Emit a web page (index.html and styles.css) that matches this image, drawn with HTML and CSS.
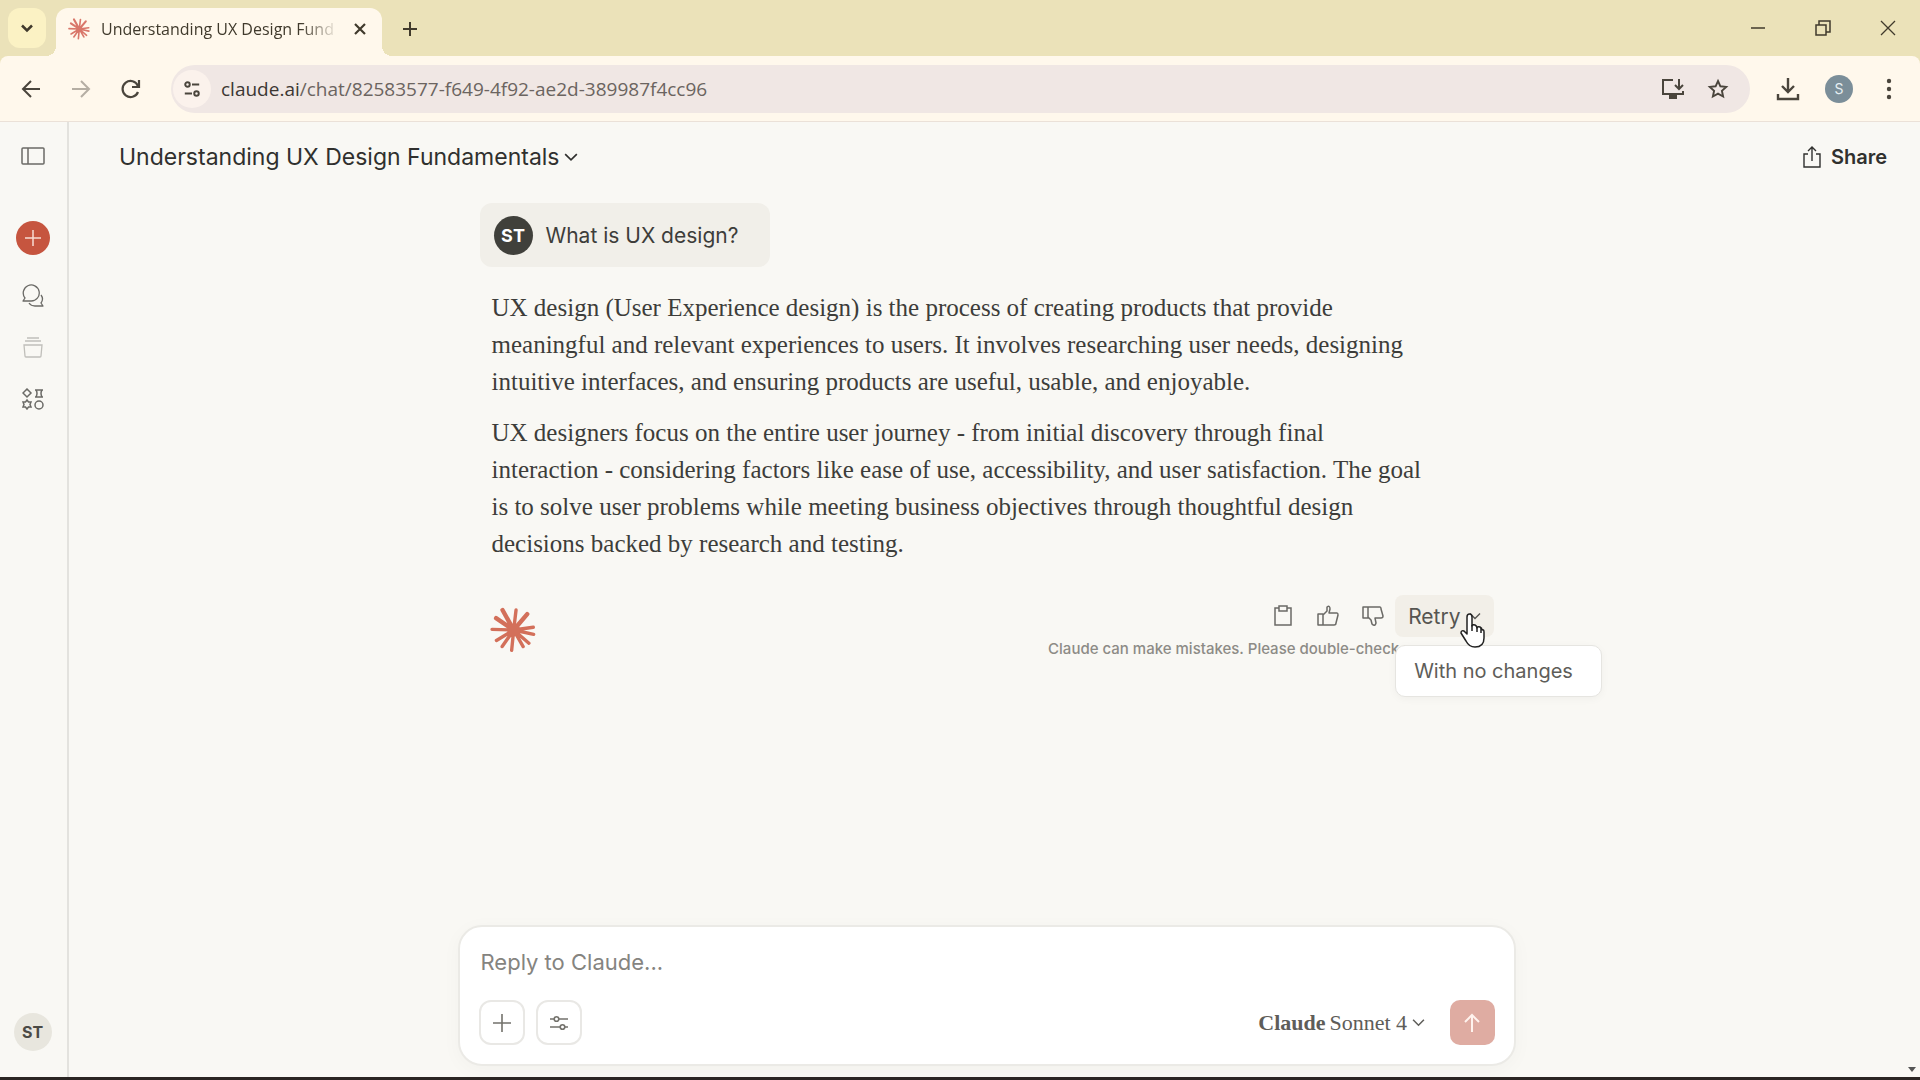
FILE: index.html
```html
<!DOCTYPE html>
<html lang="en">
<head>
    <meta charset="UTF-8">
    <title>Understanding UX Design Fundamentals</title>
    <meta name="viewport" content="width=device-width, initial-scale=1.0">
    <link rel="stylesheet" href="styles.css">
</head>
<body>
<svg class="defs" aria-hidden="true">
    <symbol id="burst" viewBox="0 0 136 136">
        <g stroke="currentColor" stroke-width="10" stroke-linecap="round">
            <path d="M70 68L37 9M70 68L110 21M70 68L18 33" stroke-width="13"/>
            <path d="M70 68L77 9M70 68L6 66M70 68L19 99M70 68L36 117M70 68L64 128M70 68L98 117M70 68L115 107M70 68L129 81M70 68L128 60"/>
        </g>
        <circle cx="70" cy="68" r="19" fill="currentColor"/>
    </symbol>
    <symbol id="chevron" viewBox="0 0 12 12">
        <path d="M1 3.500L6 8.500L11 3.500" fill="none" stroke="currentColor" stroke-width="1.400"/>
    </symbol>
</svg>

<!-- browser -->
<div class="tabStrip">
    <button class="tabSearch" aria-label="Search tabs"><svg width="12" height="12" viewBox="0 0 12 12" fill="none" stroke="currentColor" stroke-width="2.500"><path d="M1 3.500l5 5 5-5"/></svg></button>
    <div class="tab">
        <svg class="tabIcon" width="22" height="22"><use href="#burst"/></svg>
        <span class="tabTitle">Understanding UX Design Fund</span>
        <button class="plain" aria-label="Close tab"><svg width="12" height="12" viewBox="0 0 12 12" fill="none" stroke="currentColor" stroke-width="2.200"><path d="M1 1l10 10M11 1L1 11"/></svg></button>
    </div>
    <button class="plain newTab" aria-label="New tab"><svg width="16" height="16" viewBox="0 0 16 16" fill="none" stroke="currentColor" stroke-width="2"><path d="M8 1v14M1 8h14"/></svg></button>
    <div class="winCtrl">
        <button class="plain" aria-label="Minimize"><svg width="16" height="16" viewBox="0 0 16 16" fill="none" stroke="currentColor" stroke-width="1.500"><path d="M1 8h14"/></svg></button>
        <button class="plain" aria-label="Restore"><svg width="16" height="16" viewBox="0 0 16 16" fill="none" stroke="currentColor" stroke-width="1.500"><path d="M1 5h10v10H1zM4 5V1h11v11h-4"/></svg></button>
        <button class="plain" aria-label="Close"><svg width="16" height="16" viewBox="0 0 16 16" fill="none" stroke="currentColor" stroke-width="1.300"><path d="M1 1l14 14M15 1L1 15"/></svg></button>
    </div>
</div>
<div class="toolbar">
    <button class="plain" aria-label="Back"><svg width="20" height="20" viewBox="0 0 20 20" fill="none" stroke="currentColor" stroke-width="2"><path d="M19 10H3M10 2l-8 8 8 8"/></svg></button>
    <button class="plain off" aria-label="Forward" disabled><svg width="20" height="20" viewBox="0 0 20 20" fill="none" stroke="currentColor" stroke-width="2"><path d="M1 10h16M10 2l8 8-8 8"/></svg></button>
    <button class="plain" aria-label="Reload"><svg width="20" height="20" viewBox="0 0 20 20" fill="none" stroke="currentColor" stroke-width="2.200"><path d="M17 13a8 8 0 1 1 0-6"/><path d="M18 1v7h-7"/></svg></button>
    <div class="omnibox">
        <button class="siteInfo" aria-label="Site information"><svg width="18" height="18" viewBox="0 0 20 20" fill="none" stroke="currentColor" stroke-width="2.200"><circle cx="5" cy="5" r="2.500"/><path d="M10 5h8M2 15h8"/><circle cx="15" cy="15" r="2.500"/></svg></button>
        <label class="url" for="url"><b>claude.ai</b>/chat/82583577-f649-4f92-ae2d-389987f4cc96</label>
        <input class="urlInput" id="url" type="text" aria-label="Address">
        <button class="plain" aria-label="Install"><svg width="24" height="22" viewBox="0 0 24 22" fill="none" stroke="currentColor" stroke-width="2"><path d="M12 2H2v14h20v-3"/><path d="M18 1v9M14 7l4 4 4-4"/><path d="M8 19h8" stroke-width="4"/></svg></button>
        <button class="plain" aria-label="Bookmark"><svg width="22" height="22" viewBox="0 0 22 22" fill="none" stroke="currentColor" stroke-width="1.900"><path d="M11 3l2.400 5.300 5.800.6-4.300 3.900 1.200 5.700-5.100-2.900-5.100 2.900 1.200-5.700L2.800 8.900l5.800-.6z"/></svg></button>
    </div>
    <div class="toolEnd">
        <button class="plain" aria-label="Downloads"><svg width="24" height="24" viewBox="0 0 24 24" fill="none" stroke="currentColor" stroke-width="2.400"><path d="M12 1v14M6 9l6 6 6-6M2 17v5h20v-5"/></svg></button>
        <button class="profile" aria-label="Profile">S</button>
        <button class="plain" aria-label="Menu"><svg width="6" height="22" viewBox="0 0 6 22" fill="currentColor"><circle cx="3" cy="3" r="2.200"/><circle cx="3" cy="11" r="2.200"/><circle cx="3" cy="19" r="2.200"/></svg></button>
    </div>
</div>

<!-- page -->
<div class="page">
    <nav class="sidebar">
        <button class="plain toggle" aria-label="Open sidebar"><svg width="24" height="18" viewBox="0 0 24 18" fill="none" stroke="currentColor" stroke-width="1.500"><rect x="1" y="1" width="22" height="16" rx="1"/><path d="M7 1v16"/></svg></button>
        <button class="newChat" aria-label="New chat"><svg width="16" height="16" viewBox="0 0 16 16" fill="none" stroke="currentColor" stroke-width="1.500"><path d="M8 0v16M0 8h16"/></svg></button>
        <a class="sideLink" href="#chats" aria-label="Chats"><svg width="24" height="24" viewBox="0 0 24 24" fill="none" stroke="currentColor" stroke-width="1.300" stroke-linejoin="round"><path d="M2 17l2-3a8 8 0 1 1 6 3z"/><path d="M20 11q3 4 0 8l2 3h-8q-4 0-6-3"/></svg></a>
        <a class="sideLink dim" href="#projects" aria-label="Projects"><svg width="22" height="22" viewBox="0 0 22 22" fill="none" stroke="currentColor" stroke-width="1.300"><path d="M5 1h12M3 4h16M2 8h18l-1 11q0 1-1 1H4q-1 0-1-1z"/></svg></a>
        <a class="sideLink" href="#artifacts" aria-label="Artifacts"><svg width="22" height="22" viewBox="0 0 22 22" fill="none" stroke="currentColor" stroke-width="1.500"><path d="M5 1l4 4-4 4-4-4zM13 2h8M13 9h8M14 2q2 3 0 7M20 2q-2 3 0 7"/><path d="M5 12l1.500 2H9l-1 2.500L9 19H6.500L5 21l-1.500-2H1l1-2.500L1 14h2.500z"/><circle cx="17" cy="17" r="4"/></svg></a>
        <button class="account" aria-label="Account">ST</button>
    </nav>
    <main class="main">
        <header class="chatHead">
            <button class="chatTitle">Understanding UX Design Fundamentals <svg width="14" height="14"><use href="#chevron"/></svg></button>
            <button class="share"><svg width="20" height="22" viewBox="0 0 20 22" fill="none" stroke="currentColor" stroke-width="1.400"><path d="M6 8H2v13h16V8h-4M10 15V2M6 5l4-4 4 4"/></svg>Share</button>
        </header>
        <div class="chat">
            <div class="bubble">
                <span class="avatar">ST</span>
                <p>What is UX design?</p>
            </div>
            <div class="answer">
                <p>UX design (User Experience design) is the process of creating products that provide meaningful and relevant experiences to users. It involves researching user needs, designing intuitive interfaces, and ensuring products are useful, usable, and enjoyable.</p>
                <p>UX designers focus on the entire user journey - from initial discovery through final interaction - considering factors like ease of use, accessibility, and user satisfaction. The goal is to solve user problems while meeting business objectives through thoughtful design decisions backed by research and testing.</p>
            </div>
            <div class="answerFoot">
                <svg class="logo" width="46" height="46"><use href="#burst"/></svg>
                <div class="footEnd">
                    <div class="actions">
                        <button class="act" aria-label="Copy"><svg width="20" height="22" viewBox="0 0 20 22" fill="none" stroke="currentColor" stroke-width="1.500"><path d="M6 3H2v17h16V3h-4"/><path d="M6 1h8v5H6z"/></svg></button>
                        <button class="act" aria-label="Good response"><svg width="22" height="22" viewBox="0 0 22 22" fill="none" stroke="currentColor" stroke-width="1.500" stroke-linejoin="round"><path d="M1 9h5v11H1zM6 10l4-4V2q3-2 3 2l-1 4h8q1 0 1 2l-2 8q0 2-2 2H6"/></svg></button>
                        <button class="act" aria-label="Bad response"><svg width="22" height="22" viewBox="0 0 22 22" fill="none" stroke="currentColor" stroke-width="1.500" stroke-linejoin="round"><path d="M1 2h5v11H1zM6 2h12q1 0 1 2l2 7q0 2-2 2h-6l1 5q-1 4-4 1l-1-4-3-3"/></svg></button>
                        <div class="retryWrap">
                            <button class="retry" aria-haspopup="menu" aria-expanded="true">Retry <svg width="12" height="12"><use href="#chevron"/></svg></button>
                            <div class="menu" role="menu">
                                <button class="menuItem" role="menuitem">With no changes</button>
                            </div>
                            <svg class="cursor" width="26" height="36" viewBox="0 0 26 36" fill="#fff" stroke="#222" stroke-width="1.500" stroke-linejoin="round" aria-hidden="true"><path d="M8 21V4q0-3 2.500-3T13 4v9q1-2 3-1t2 3q1-2 3-1t2 3q2-1 2 2v6q0 9-9 9-6 0-9-6l-5-8q0-3 3-2z"/><path d="M13 12v6M18 14v5M22 15v5"/></svg>
                        </div>
                    </div>
                    <p class="note">Claude can make mistakes. Please double-check responses.</p>
                </div>
            </div>
        </div>
        <form class="composer">
            <input class="reply" type="text" placeholder="Reply to Claude..." aria-label="Reply to Claude">
            <div class="composerRow">
                <button class="box" type="button" aria-label="Add"><svg width="18" height="18" viewBox="0 0 18 18" fill="none" stroke="currentColor" stroke-width="1.600"><path d="M9 0v18M0 9h18"/></svg></button>
                <button class="box" type="button" aria-label="Tools"><svg width="18" height="16" viewBox="0 0 18 16" fill="none" stroke="currentColor" stroke-width="1.600"><path d="M0 4h4M9 4h9M0 12h10M15 12h3"/><circle cx="6.500" cy="4" r="2.300"/><circle cx="12.500" cy="12" r="2.300"/></svg></button>
                <div class="model">
                    <label for="model">Claude</label>
                    <select id="model"><option>Sonnet 4</option></select>
                    <svg width="13" height="13"><use href="#chevron"/></svg>
                </div>
                <button class="send" type="submit" aria-label="Send"><svg width="16" height="20" viewBox="0 0 16 20" fill="none" stroke="currentColor" stroke-width="2"><path d="M8 19V2M1 9l7-7 7 7"/></svg></button>
            </div>
        </form>
    </main>
    <div class="scrollGutter"><svg width="8" height="6" viewBox="0 0 8 6" fill="#555"><path d="M0 0h8L4 5z"/></svg></div>
</div>
<div class="taskbar"></div>
</body>
</html>
```
FILE: styles.css
```css
* {
    box-sizing: border-box;
}
body {
    margin: 0;
    height: 100vh;
    display: flex;
    flex-direction: column;
    overflow: hidden;
    background-color: #f9f8f4;
    color: #3d3d3a;
    font-family: Inter, "Liberation Sans", sans-serif;
    font-size: 20px;
}
p {
    margin: 0;
}
button, input, select {
    font: inherit;
    color: inherit;
    border: 0;
    padding: 0;
    background: none;
}
button {
    display: flex;
    align-items: center;
    justify-content: center;
    flex-shrink: 0;
}
svg {
    display: block;
    flex-shrink: 0;
}
.defs {
    position: absolute;
    width: 0;
    height: 0;
}

/* browser */
.tabStrip {
    display: flex;
    align-items: center;
    height: 56px;
    padding: 8px 0 0 8px;
    background-color: #ebe2b9;
    color: #403a2c;
    font-family: "Open Sans", sans-serif;
    font-size: 16px;
}
.tabSearch {
    width: 38px;
    height: 40px;
    margin-right: 10px;
    align-self: flex-start;
    border-radius: 12px;
    background-color: #fbf2c4;
}
.tab {
    position: relative;
    display: flex;
    align-items: center;
    width: 326px;
    height: 48px;
    padding: 0 16px 6px 12px;
    border-radius: 12px 12px 0 0;
    background-color: #fff8ec;
}
.tab:before, .tab:after {
    content: "";
    position: absolute;
    bottom: 0;
    width: 10px;
    height: 10px;
}
.tab:before {
    right: 100%;
    background: radial-gradient(circle at 0 0, transparent 10px, #fff8ec 10px);
}
.tab:after {
    left: 100%;
    background: radial-gradient(circle at 100% 0, transparent 10px, #fff8ec 10px);
}
.tabIcon {
    color: #d9776a;
}
.tabTitle {
    flex: 1;
    margin: 0 15px 0 11px;
    white-space: nowrap;
    -webkit-mask-image: linear-gradient(to right, #000 84%, transparent);
    mask-image: linear-gradient(to right, #000 84%, transparent);
}
.newTab {
    margin: 0 0 6px 20px;
}
.winCtrl {
    display: flex;
    gap: 49px;
    margin: 0 24px 8px auto;
}
.toolbar {
    display: flex;
    align-items: center;
    height: 66px;
    padding: 0 28px 0 21px;
    border-bottom: 1px solid #ebe1d8;
    border-radius: 8px 8px 0 0;
    background-color: #fff8ec;
    box-shadow: 0 -8px #ebe2b9;
    clip-path: inset(0);
    color: #4a453c;
    gap: 30px;
}
.toolbar .off {
    color: #b5aea3;
}
.omnibox {
    flex: 1;
    display: flex;
    align-items: center;
    height: 48px;
    padding: 0 21px 0 2px;
    gap: 22px;
    border-radius: 24px;
    background-color: #f0e7e4;
}
.siteInfo {
    width: 38px;
    height: 38px;
    border-radius: 19px;
    background-color: #fbf2ec;
}
.url {
    margin-left: -12px;
    font-family: "Open Sans", sans-serif;
    font-size: 19px;
    color: #6b6460;
}
.url b {
    font-weight: 400;
    color: #3c3733;
}
.urlInput {
    flex: 1;
    min-width: 0;
    outline: none;
}
.toolEnd {
    display: flex;
    align-items: center;
    gap: 25px;
    margin-left: -4px;
}
.toolEnd .plain:last-child {
    margin-left: 8px;
}
.profile {
    width: 28px;
    height: 28px;
    border-radius: 14px;
    background-color: #7b8e99;
    color: #e6eef2;
    font-size: 14px;
}

/* page */
.page {
    flex: 1;
    display: flex;
    min-height: 0;
}
.sidebar {
    display: flex;
    flex-direction: column;
    align-items: center;
    width: 69px;
    padding: 25px 2px 26px 0;
    border-right: 2px solid #e3e2de;
    color: #6b6a66;
}
.newChat {
    width: 34px;
    height: 34px;
    margin: 56px 0 29px;
    border-radius: 17px;
    background-color: #c6553f;
    color: #f8dcd3;
}
.sideLink {
    margin-bottom: 29px;
    color: inherit;
}
.dim {
    color: #c0bfba;
}
.account {
    width: 38px;
    height: 38px;
    margin-top: auto;
    border-radius: 19px;
    background-color: #e8e6de;
    color: #4b4a45;
    font-size: 16px;
    font-weight: 700;
}
.main {
    flex: 1;
    display: flex;
    flex-direction: column;
    align-items: center;
    min-width: 0;
    padding-bottom: 11px;
}
.chatHead {
    align-self: stretch;
    display: flex;
    align-items: center;
    justify-content: space-between;
    height: 70px;
    padding: 0 17px 0 50px;
}
.chatTitle {
    gap: 4px;
    font-size: 23px;
    color: #30302e;
}
.share {
    gap: 9px;
    font-weight: 600;
    color: #30302e;
}
.chat {
    width: 100%;
    max-width: 1058px;
    padding: 11px 22px 0;
}
.bubble {
    display: inline-flex;
    align-items: center;
    height: 64px;
    padding: 0 32px 0 14px;
    gap: 13px;
    border-radius: 12px;
    background-color: #f1efe9;
    font-size: 21px;
}
.avatar {
    display: flex;
    align-items: center;
    justify-content: center;
    width: 39px;
    height: 39px;
    border-radius: 20px;
    background-color: #40403b;
    color: #fff;
    font-size: 18px;
    font-weight: 700;
}
.answer {
    display: flex;
    flex-direction: column;
    gap: 14px;
    margin: 22px 70px 0 12px;
    font-family: "Liberation Serif", serif;
    font-size: 25px;
    line-height: 37px;
}
.answerFoot {
    display: flex;
    justify-content: space-between;
    margin: 33px 0 0 10px;
}
.logo {
    margin-top: 12px;
    color: #d3705a;
}
.footEnd {
    display: flex;
    flex-direction: column;
    align-items: flex-end;
}
.actions {
    display: flex;
    align-items: flex-start;
    height: 42px;
    color: #6b6a66;
}
.act {
    width: 45px;
    height: 42px;
}
/* backed with the page colour so the note doesn't show between button and menu */
.retryWrap {
    position: relative;
    height: 50px;
    background-color: #f9f8f4;
}
.retry {
    height: 42px;
    padding: 0 13px;
    gap: 8px;
    border-radius: 8px;
    background-color: #f2efe8;
    color: #565551;
    font-size: 21px;
}
.menu {
    position: absolute;
    top: 50px;
    left: 0;
    padding: 0 28px 0 18px;
    border: 1px solid #e6e5e1;
    border-radius: 10px;
    background-color: #fff;
    box-shadow: 0 2px 8px rgba(0, 0, 0, 0.04);
}
.menuItem {
    height: 50px;
    white-space: nowrap;
    color: #5e5d59;
}
.cursor {
    position: absolute;
    top: 18px;
    right: 9px;
}
.note {
    margin: 1px 11px 0 0;
    font-size: 15px;
    font-weight: 500;
    line-height: 22px;
    color: #8d8b86;
}
.composer {
    width: 100%;
    max-width: 1058px;
    margin-top: auto;
    padding: 18px 19px 19px;
    border: 2px solid #ebeae6;
    border-radius: 24px;
    background-color: #fff;
    box-shadow: 0 4px 20px rgba(0, 0, 0, 0.03);
}
.reply {
    display: block;
    width: 100%;
    height: 34px;
    margin-bottom: 21px;
    padding-left: 2px;
    font-size: 22px;
    outline: none;
}
.reply::placeholder {
    color: #85847f;
    opacity: 1;
}
.composerRow {
    display: flex;
    align-items: center;
    gap: 11px;
}
.box {
    width: 46px;
    height: 45px;
    border: 2px solid #e9e8e5;
    border-radius: 12px;
    color: #73726c;
}
.model {
    display: flex;
    align-items: center;
    gap: 4px;
    margin: 0 14px 0 auto;
    font-family: "Liberation Serif", serif;
    font-size: 22px;
    color: #5e5d59;
}
.model label {
    font-weight: 700;
}
.model select {
    appearance: none;
}
.send {
    width: 45px;
    height: 45px;
    border-radius: 10px;
    background-color: #dfaca2;
    color: #fff3ee;
}
.scrollGutter {
    display: flex;
    align-items: flex-end;
    justify-content: center;
    width: 16px;
    padding-bottom: 4px;
}
.taskbar {
    height: 3px;
    background-color: #2b2523;
}
```
